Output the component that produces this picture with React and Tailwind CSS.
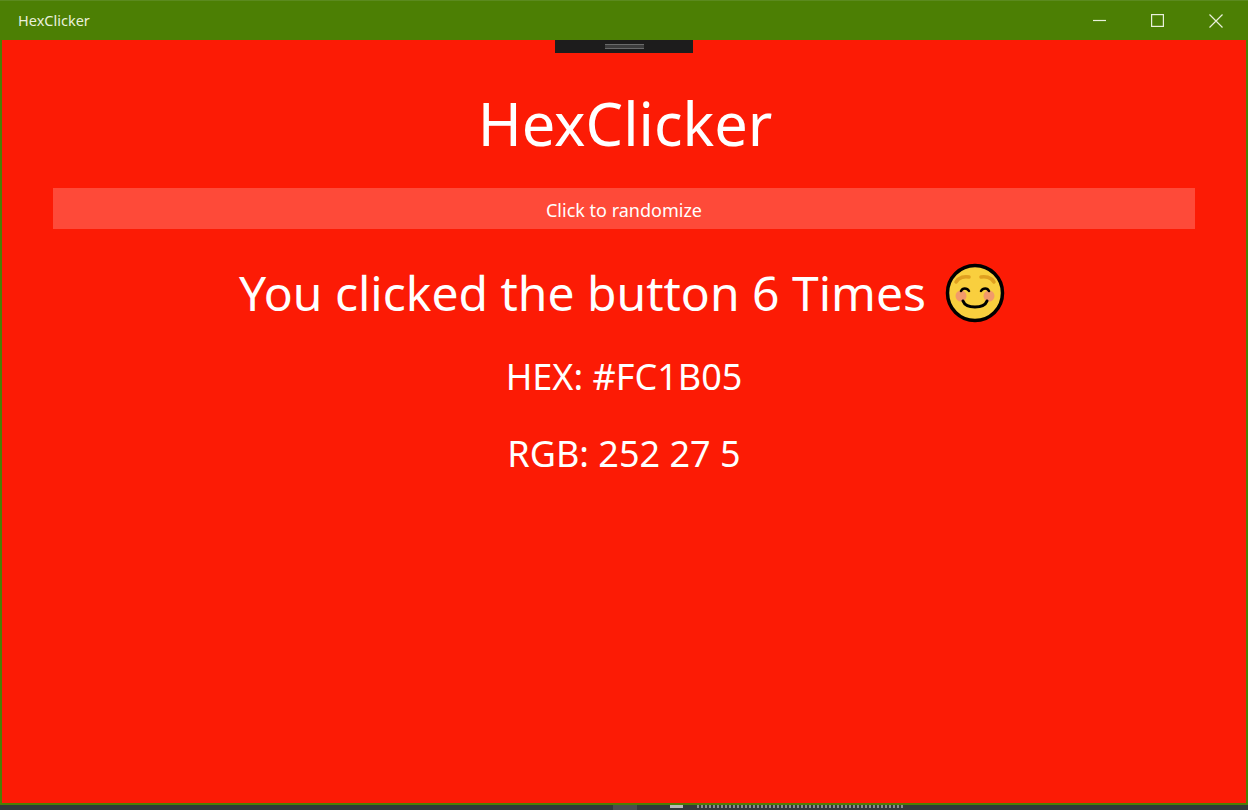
export default function App() {
  return (
    <div className="w-[1248px] h-[810px] bg-[#33383a] flex flex-col overflow-hidden font-['Noto_Sans','Open_Sans',sans-serif] text-white">
      <div className="h-[805px] shrink-0 border-x-2 border-b-2 border-[#4c7f04] flex flex-col">
        <div className="h-10 -mx-[2px] bg-[#4c7f04] border-t border-[#5b8a1f] flex items-center justify-between shrink-0">
          <span className="ml-[18px] text-[14.5px] text-[#e9f0dc] leading-none">HexClicker</span>
          <div className="flex items-center mr-[3px]">
            <div className="w-[58px] h-10 flex items-center justify-center -translate-x-[1px]">
              <svg width="13" height="13" viewBox="0 0 13 13" fill="none" stroke="#e9f0dc" strokeWidth="1.2"><path d="M0 6.5h13" /></svg>
            </div>
            <div className="w-[58px] h-10 flex items-center justify-center -translate-x-[1px]">
              <svg width="13" height="13" viewBox="0 0 13 13" fill="none" stroke="#e9f0dc" strokeWidth="1.2"><rect x="0.6" y="0.6" width="11.8" height="11.8" /></svg>
            </div>
            <div className="w-[58px] h-10 flex items-center justify-center">
              <svg width="14" height="14" viewBox="0 0 14 14" fill="none" stroke="#e9f0dc" strokeWidth="1.2"><path d="M0.5 0.5l13 13M13.5 0.5l-13 13" /></svg>
            </div>
          </div>
        </div>
        <div className="relative flex-1 bg-[#fc1b05] flex flex-col items-center">
          <div className="absolute top-0 left-[553px] w-[138px] h-[13px] bg-[#1d1c1c] flex items-center justify-center">
            <div className="w-[39px] h-[5px] border-y border-[#6a6a6a] bg-[#3c3c3c]" />
          </div>
          <h1 className="mt-[42px] ml-[2px] text-[59.5px] leading-[82px] font-normal">HexClicker</h1>
          <button className="mt-[24px] w-[1142px] h-[41px] pt-[4px] bg-[#fe4a39] text-[18px] text-white flex items-center justify-center">Click to randomize</button>
          <div className="mt-[29px] -ml-[4px] h-[70px] flex items-center text-[48px] font-normal">
            <span>You clicked the button 6 Times</span>
            <svg className="ml-[19px]" width="60" height="60" viewBox="0 0 60 60">
              <circle cx="30" cy="30" r="27.5" fill="#f9cf3e" stroke="#000" strokeWidth="3.5" />
              <path d="M11 19c3-5 9-6 13-5M49 19c-3-5-9-6-13-5" fill="none" stroke="#e0a020" strokeWidth="3.5" strokeLinecap="round" />
              <circle cx="16" cy="33" r="5.5" fill="#f29a6a" />
              <circle cx="44" cy="33" r="5.5" fill="#f29a6a" />
              <path d="M16 28c1.500-3.500 6-3.500 8 0M36 28c2-3.500 6.500-3.500 8 0" fill="none" stroke="#000" strokeWidth="2.500" strokeLinecap="round" />
              <path d="M18 38c3 8 21 8 24 0" fill="none" stroke="#000" strokeWidth="3" strokeLinecap="round" />
            </svg>
          </div>
          <p className="mt-[26px] text-[36px] leading-[46px] font-normal">HEX: #FC1B05</p>
          <p className="mt-[31px] text-[36px] leading-[46px] font-normal">RGB: 252 27 5</p>
        </div>
      </div>
      <div className="flex-1 bg-[#33383a] flex items-start">
        <div className="ml-[613px] w-[24px] h-full bg-[#4a4d4f]" />
        <div className="ml-[33px] w-[13px] h-[3px] bg-[#b8b8b8]" />
        <div className="ml-[14px] w-[208px] h-[3px] bg-[repeating-linear-gradient(90deg,#8a8d8f_0px,#8a8d8f_2px,#33383a_2px,#33383a_4px)]" />
      </div>
    </div>
  );
}
